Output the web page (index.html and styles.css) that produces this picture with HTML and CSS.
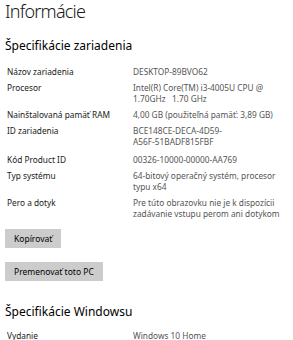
FILE: index.html
```html
<!DOCTYPE html>
<html lang="sk">
<head>
<meta charset="utf-8">
<link rel="stylesheet" href="styles.css">
</head>
<body>
<div class="page">
  <h1 class="title">Informácie</h1>
  <h2 class="section">Špecifikácie zariadenia</h2>
  <div class="specs">
    <div class="row"><div class="label">Názov zariadenia</div><div class="value">DESKTOP-89BVO62</div></div>
    <div class="row"><div class="label">Procesor</div><div class="value">Intel(R) Core(TM) i3-4005U CPU @<br>1.70GHz&nbsp;&nbsp; 1.70 GHz</div></div>
    <div class="row"><div class="label">Nainštalovaná pamäť RAM</div><div class="value">4,00 GB (použiteľná pamäť: 3,89 GB)</div></div>
    <div class="row"><div class="label">ID zariadenia</div><div class="value">BCE148CE-DECA-4D59-<br>A56F-51BADF815FBF</div></div>
    <div class="row row-gap"><div class="label">Kód Product ID</div><div class="value">00326-10000-00000-AA769</div></div>
    <div class="row"><div class="label">Typ systému</div><div class="value">64-bitový operačný systém, procesor<br>typu x64</div></div>
    <div class="row"><div class="label">Pero a dotyk</div><div class="value">Pre túto obrazovku nie je k dispozícii<br>zadávanie vstupu perom ani dotykom</div></div>
  </div>
  <div class="actions">
    <button class="btn">Kopírovať</button>
    <button class="btn">Premenovať toto PC</button>
  </div>
  <h2 class="section section-win">Špecifikácie Windowsu</h2>
  <div class="specs">
    <div class="row"><div class="label">Vydanie</div><div class="value">Windows 10 Home</div></div>
  </div>
</div>
</body>
</html>
```
FILE: styles.css
```css
html, body {
  margin: 0;
  padding: 0;
  background: #ffffff;
}
.page {
  padding: 0 0 0 5px;
  font-family: "Noto Sans", "Open Sans", sans-serif;
  color: #000;
}
.title {
  margin: 0;
  font-size: 18px;
  font-weight: 300;
  letter-spacing: -0.8px;
  line-height: 22px;
  color: #1a1a1a;
}
.section {
  margin: 16px 0 12px 0;
  font-size: 12px;
  font-weight: 400;
  line-height: 16px;
  color: #000;
}
.section-win {
  margin-top: 23px;
  margin-bottom: 10px;
}
.specs {
  display: flex;
  flex-direction: column;
  padding-left: 2px;
}
.row {
  display: grid;
  grid-template-columns: 126px 1fr;
  font-size: 8.3px;
  line-height: 11px;
  padding-bottom: 5px;
}
.row-gap {
  padding-top: 2px;
}
.label {
  color: #1a1a1a;
}
.value {
  color: #555;
  white-space: nowrap;
}
.actions {
  display: flex;
  flex-direction: column;
  align-items: flex-start;
  gap: 14px;
  margin-top: 5px;
}
.btn {
  font-family: "Noto Sans", "Open Sans", sans-serif;
  font-size: 8.5px;
  color: #000;
  background: #cccccc;
  border: none;
  height: 19px;
  padding: 0 9px;
  margin: 0;
}
```
